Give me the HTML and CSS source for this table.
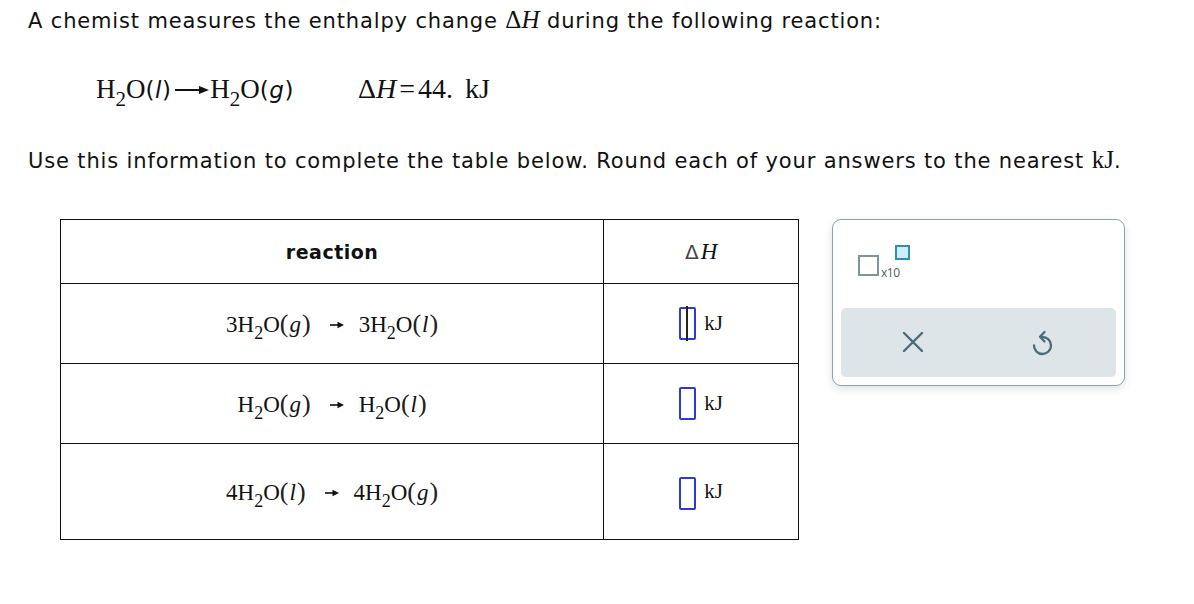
FILE: index.html
```html
<!DOCTYPE html>
<html>
<head>
<meta charset="utf-8">
<link rel="stylesheet" href="styles.css">
</head>
<body>
<div class="page">
  <p class="intro">A chemist measures the enthalpy change <span class="m">Δ<i>H</i></span> during the following reaction:</p>
  <div class="eq">
    <span class="rx">H<sub>2</sub>O<span class="st">(<i>l</i>)</span><svg class="arr" width="34" height="10" viewBox="0 0 34 10"><path d="M0 5 H26" stroke="#111" stroke-width="2"/><path d="M24 1 L34 5 L24 9 Z" fill="#111"/></svg>H<sub>2</sub>O<span class="st">(<i>g</i>)</span></span>
    <span class="dh">Δ<i>H</i><span class="eqs">=</span>44.<span class="sp"></span>kJ</span>
  </div>
  <p class="instr">Use this information to complete the table below. Round each of your answers to the nearest <span class="m">kJ</span>.</p>
  <div class="main">
    <table class="tbl">
      <tr class="hdr"><th class="c1">reaction</th><th class="c2"><span class="dsym">Δ</span><i class="hi">H</i></th></tr>
      <tr class="r1"><td class="c1"><span class="chem">3H<sub>2</sub>O<span class="p">(</span><i>g</i><span class="p">)</span><svg class="ar" width="14" height="8" viewBox="0 0 14 8"><path d="M0 4 H9" stroke="#111" stroke-width="1.6"/><path d="M7.5 0.8 L14 4 L7.5 7.2 Z" fill="#111"/></svg>3H<sub>2</sub>O<span class="p">(</span><i>l</i><span class="p">)</span></span></td><td class="c2"><span class="box active"><span class="caret"></span></span><span class="kj">kJ</span></td></tr>
      <tr class="r2"><td class="c1"><span class="chem">H<sub>2</sub>O<span class="p">(</span><i>g</i><span class="p">)</span><svg class="ar" width="14" height="8" viewBox="0 0 14 8"><path d="M0 4 H9" stroke="#111" stroke-width="1.6"/><path d="M7.5 0.8 L14 4 L7.5 7.2 Z" fill="#111"/></svg>H<sub>2</sub>O<span class="p">(</span><i>l</i><span class="p">)</span></span></td><td class="c2"><span class="box"></span><span class="kj">kJ</span></td></tr>
      <tr class="r3"><td class="c1"><span class="chem">4H<sub>2</sub>O<span class="p">(</span><i>l</i><span class="p">)</span><svg class="ar" width="14" height="8" viewBox="0 0 14 8"><path d="M0 4 H9" stroke="#111" stroke-width="1.6"/><path d="M7.5 0.8 L14 4 L7.5 7.2 Z" fill="#111"/></svg>4H<sub>2</sub>O<span class="p">(</span><i>g</i><span class="p">)</span></span></td><td class="c2"><span class="box"></span><span class="kj">kJ</span></td></tr>
    </table>
    <div class="widget">
      <div class="sci">
        <span class="sq"></span><span class="x10">x10</span><span class="sqs"></span>
      </div>
      <div class="bar">
        <svg class="ic" width="22" height="22" viewBox="0 0 22 22"><path d="M2 2 L20 20 M20 2 L2 20" stroke="#4d6a78" stroke-width="2.4" fill="none" stroke-linecap="round"/></svg>
        <svg class="ic undo" width="22" height="28" viewBox="0 0 22 28"><path d="M11 8 A8.5 8.5 0 1 1 3 16.5" stroke="#4d6a78" stroke-width="2.3" fill="none" stroke-linecap="round"/><path d="M13.5 3 L9 7.8 L13.5 12.5" stroke="#4d6a78" stroke-width="2.3" fill="none" stroke-linecap="round" stroke-linejoin="round"/></svg>
      </div>
    </div>
  </div>
</div>
</body>
</html>
```
FILE: styles.css
```css
* { box-sizing: border-box; }
body { margin: 0; background: #fff; color: #111; font-family: "DejaVu Sans", Verdana, sans-serif; }
.page { padding: 5px 0 0 28px; }
p { margin: 0; }
.intro { font-size: 21px; line-height: 30px; letter-spacing: 0.85px; }
.m { font-family: "Liberation Serif", serif; font-size: 25px; letter-spacing: 0; }
.eq { margin-top: 38px; margin-left: 68px; font-family: "Liberation Serif", serif; font-size: 27px; line-height: 30px; display: flex; gap: 64px; }
.eq sub { font-size: 21px; vertical-align: -8px; line-height: 0; }
.st { font-family: "DejaVu Sans", sans-serif; font-size: 23px; letter-spacing: 0.5px; }
.st i { font-style: oblique; }
.arr { margin: 0 1px 0 4px; vertical-align: 3px; }
.dh { font-size: 28px; }
.eqs { margin: 0 3px; }
.sp { display: inline-block; width: 12px; }
.instr { margin-top: 40px; font-size: 21px; line-height: 30px; letter-spacing: 0.85px; }
.main { display: flex; align-items: flex-start; margin-top: 43px; margin-left: 32px; }
.tbl { border-collapse: collapse; width: 739px; }
.tbl th, .tbl td { border: 1.5px solid #111; text-align: center; padding: 0; }
.tbl .c1 { width: 544px; }
.tbl .c2 { width: 195px; }
.hdr th { height: 64px; font-weight: bold; font-size: 19px; letter-spacing: 0.5px; }
.dsym { font-weight: normal; color: #444; font-size: 20px; letter-spacing: 0; }
.hi { font-family: "Liberation Serif", serif; font-weight: normal; font-size: 23px; margin-left: 2px; letter-spacing: 0; }
.r1 td { height: 80px; }
.r2 td { height: 80px; }
.r3 td { height: 96px; }
.chem { font-family: "Liberation Serif", serif; font-size: 23px; }
.chem sub { font-size: 18px; vertical-align: -7px; line-height: 0; }
.chem .p { font-size: 26px; color: #222; }
.chem i { padding: 0 1px; }
.ar { margin: 0 15px 0 19px; vertical-align: 3px; }
.c2 { white-space: nowrap; }
.box { display: inline-block; width: 17px; height: 33px; border: 2px solid #2b3ad8; border-radius: 2px; vertical-align: middle; position: relative; margin-right: 8px; }
.caret { position: absolute; left: 5px; top: -3px; width: 1.5px; height: 35px; background: #222; }
.kj { font-family: "Liberation Serif", serif; font-size: 21px; vertical-align: middle; }
.r3 .box { position: relative; top: 2px; }
.widget { margin-left: 33px; width: 293px; height: 167px; border: 1px solid #8fa2ab; border-radius: 9px; box-shadow: 0 3px 8px rgba(0,0,0,0.12); padding: 24px 8px 8px 8px; display: flex; flex-direction: column; }
.sci { position: relative; height: 64px; }
.sq { position: absolute; left: 17px; top: 11px; width: 21px; height: 21px; border: 2px solid #7f939b; }
.x10 { position: absolute; left: 40px; top: 20px; font-size: 12px; color: #4b5b63; font-family: "Open Sans", sans-serif; letter-spacing: -0.5px; }
.sqs { position: absolute; left: 54px; top: 1px; width: 15px; height: 15px; border: 2px solid #2f8fad; background: #cdeef7; }
.bar { height: 70px; background: #dee5e8; border-radius: 5px; display: flex; align-items: center; justify-content: space-around; padding: 0 10px 0 8px; }
.undo { margin-top: 2px; }
```
